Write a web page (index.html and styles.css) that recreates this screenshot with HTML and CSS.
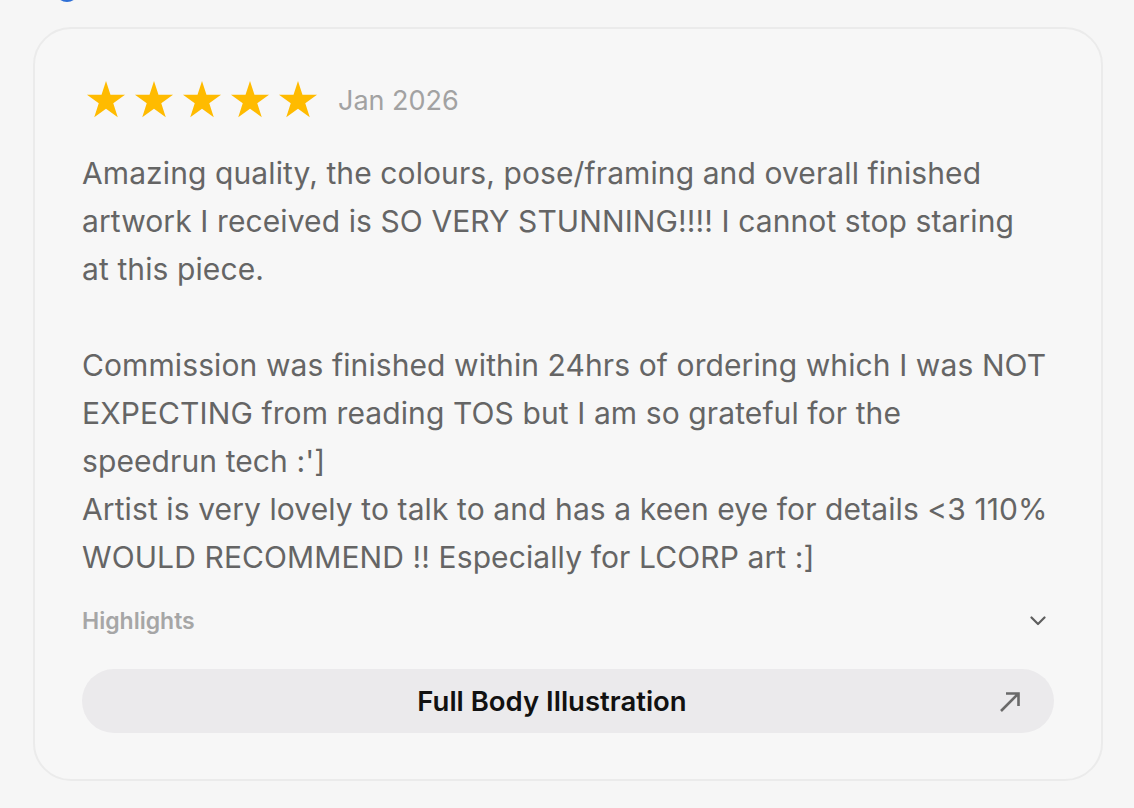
FILE: index.html
```html
<!DOCTYPE html>
<html>
<head>
<meta charset="utf-8">
<link rel="stylesheet" href="styles.css">
</head>
<body>
<div class="page">
  <div class="peek"><span class="peek-dot"></span></div>
  <div class="card">
    <div class="head">
      <div class="stars">
        <svg class="star" viewBox="0 0 24 24"><path d="M12 .6l2.69 8.29h8.72l-7.05 5.13 2.69 8.29L12 17.18l-7.05 5.13 2.69-8.29-7.05-5.13h8.72z"/></svg>
        <svg class="star" viewBox="0 0 24 24"><path d="M12 .6l2.69 8.29h8.72l-7.05 5.13 2.69 8.29L12 17.18l-7.05 5.13 2.69-8.29-7.05-5.13h8.72z"/></svg>
        <svg class="star" viewBox="0 0 24 24"><path d="M12 .6l2.69 8.29h8.72l-7.05 5.13 2.69 8.29L12 17.18l-7.05 5.13 2.69-8.29-7.05-5.13h8.72z"/></svg>
        <svg class="star" viewBox="0 0 24 24"><path d="M12 .6l2.69 8.29h8.72l-7.05 5.13 2.69 8.29L12 17.18l-7.05 5.13 2.69-8.29-7.05-5.13h8.72z"/></svg>
        <svg class="star" viewBox="0 0 24 24"><path d="M12 .6l2.69 8.29h8.72l-7.05 5.13 2.69 8.29L12 17.18l-7.05 5.13 2.69-8.29-7.05-5.13h8.72z"/></svg>
      </div>
      <span class="date">Jan 2026</span>
    </div>
    <p class="review">Amazing quality, the colours, pose/framing and overall finished
artwork I received is SO VERY STUNNING!!!! I cannot stop staring
at this piece.

Commission was finished within 24hrs of ordering which I was NOT
EXPECTING from reading TOS but I am so grateful for the
speedrun tech :']
Artist is very lovely to talk to and has a keen eye for details &lt;3 110%
WOULD RECOMMEND !! Especially for LCORP art :]</p>
    <div class="highlights">
      <span class="hl-label">Highlights</span>
      <svg class="chev" viewBox="0 0 16 10"><path d="M1.5 1.5l6.5 6.5 6.5-6.5" fill="none" stroke="#5e5e5e" stroke-width="2.2" stroke-linecap="round" stroke-linejoin="round"/></svg>
    </div>
    <button class="product">
      <span class="product-name">Full Body Illustration</span>
      <svg class="arrow" viewBox="0 0 24 24"><path d="M3 22L20.5 4.5M8 4.5h12.5V17" fill="none" stroke="#6a6a6a" stroke-width="2.6"/></svg>
    </button>
  </div>
</div>
</body>
</html>
```
FILE: styles.css
```css
* { box-sizing: border-box; }
html, body { margin: 0; padding: 0; background: #f6f6f6; }
body { font-family: "Inter", "Lato", sans-serif; }
.page { padding: 0 31px 0 33px; }
.peek { height: 25px; overflow: hidden; padding-left: 22px; }
.peek-dot { display: block; width: 24px; height: 24px; border-radius: 50%; background: #2e6fd6; margin-top: -22px; }
.card {
  margin-top: 2px;
  border: 2px solid #ebebeb;
  border-radius: 38px;
  background: #f7f7f7;
  padding: 51px 47px 46px 47px;
  display: flex;
  flex-direction: column;
}
.head { display: flex; align-items: center; gap: 20px; height: 40px; }
.stars { display: flex; gap: 8px; padding-left: 4px; }
.star { width: 40px; height: 40px; fill: #ffbb00; }
.date { font-size: 27px; color: #a2a2a2; }
.review {
  margin: 29px 0 0 0;
  white-space: pre-line;
  font-size: 30px;
  letter-spacing: 0.1px;
  line-height: 48px;
  color: #656565;
}
.highlights { display: flex; justify-content: space-between; align-items: center; margin-top: 26px; padding-right: 8px; }
.hl-label { font-size: 23px; font-weight: 600; color: #a6a6a6; }
.chev { width: 16px; height: 10px; }
.product {
  margin-top: 34px;
  height: 64px;
  border: none;
  border-radius: 32px;
  background: #ebeaec;
  display: flex;
  align-items: center;
  padding: 0 32px 0 24px;
  font-family: inherit;
}
.product-name { flex: 1; text-align: center; font-size: 27.5px; font-weight: 600; color: #111; }
.arrow { width: 24px; height: 24px; flex: none; }
```
